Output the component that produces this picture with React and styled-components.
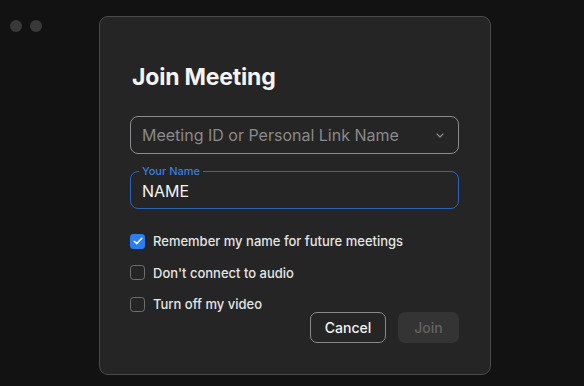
import React from "react";
import styled, { createGlobalStyle } from "styled-components";

const Global = createGlobalStyle`
  html, body {
    margin: 0;
    background: #121212;
  }
  body {
    font-family: Inter, "Noto Sans", "Liberation Sans", sans-serif;
    -webkit-font-smoothing: antialiased;
  }
`;

const Window = styled.div`
  display: flex;
  align-items: flex-start;
  width: 584px;
  height: 386px;
  padding-top: 16px;
  box-sizing: border-box;
  background: #121212;
  overflow: hidden;
`;

const Lights = styled.div`
  flex: none;
  display: flex;
  gap: 8px;
  width: 99px;
  padding: 4px 0 0 10px;
  box-sizing: border-box;
`;

const Light = styled.span`
  width: 12px;
  height: 12px;
  border-radius: 50%;
  background: #393939;
`;

const Dialog = styled.div`
  flex: none;
  width: 392px;
  height: 359px;
  box-sizing: border-box;
  background: #252525;
  border: 1px solid #4a4a4a;
  border-radius: 9px;
  padding: 45px 31px 0 30px;
  display: flex;
  flex-direction: column;
`;

const Title = styled.h1`
  margin: 0 0 0 2px;
  font-size: 23px;
  font-weight: 700;
  color: #f4f4f4;
  line-height: 30px;
  letter-spacing: -0.2px;
`;

const Select = styled.div`
  margin-top: 24px;
  height: 38px;
  box-sizing: border-box;
  border: 1.5px solid #8c8c8c;
  border-radius: 8px;
  display: flex;
  align-items: center;
  justify-content: space-between;
  padding: 0 14px 0 11px;
  color: #8a8a8a;
  font-size: 16px;
`;

const NameField = styled.fieldset`
  margin: 12px 0 0;
  height: 43px;
  box-sizing: border-box;
  border: 1.5px solid #2d63bd;
  border-radius: 8px;
  padding: 0 11px;
  display: flex;
  align-items: center;
`;

const Legend = styled.legend`
  font-size: 11px;
  line-height: 11px;
  font-weight: 500;
  color: #3a7ee0;
  padding: 0 3px;
  margin-left: -3px;
`;

const NameValue = styled.span`
  color: #f2f2f2;
  font-size: 16px;
  margin-top: 4px;
`;

const Options = styled.div`
  margin-top: 24px;
  display: flex;
  flex-direction: column;
  gap: 15.5px;
`;

const Option = styled.label`
  display: flex;
  align-items: center;
  gap: 8px;
  font-size: 13px;
  font-weight: 500;
  color: #e4e4e4;
  height: 16px;
`;

const Box = styled.span`
  width: 15px;
  height: 15px;
  box-sizing: border-box;
  border-radius: 3.5px;
  display: flex;
  align-items: center;
  justify-content: center;
  background: ${(p) => (p.checked ? "#2a7ef1" : "transparent")};
  border: ${(p) => (p.checked ? "none" : "1.5px solid #6f6f6f")};
`;

const Actions = styled.div`
  display: flex;
  justify-content: flex-end;
  gap: 12px;
  margin-top: 0;
`;

const Button = styled.button`
  height: 31px;
  box-sizing: border-box;
  border-radius: 7px;
  font-family: inherit;
  font-size: 14px;
  font-weight: 500;
  padding: 0;
  width: ${(p) => (p.primary ? "61px" : "76px")};
  background: ${(p) => (p.primary ? "#343434" : "transparent")};
  color: ${(p) => (p.primary ? "#626262" : "#f2f2f2")};
  border: ${(p) => (p.primary ? "none" : "1px solid #8a8a8a")};
`;

function Check() {
  return (
    <svg width="10" height="8" viewBox="0 0 10 8" fill="none">
      <path d="M1.2 4.2 L3.8 6.6 L8.8 1.2" stroke="#fff" strokeWidth="1.5" strokeLinecap="round" strokeLinejoin="round" />
    </svg>
  );
}

function Chevron() {
  return (
    <svg width="8" height="5" viewBox="0 0 8 5" fill="none">
      <path d="M1 1 L4 4 L7 1" stroke="#8a8a8a" strokeWidth="1.2" strokeLinecap="round" strokeLinejoin="round" />
    </svg>
  );
}

const options = [
  { label: "Remember my name for future meetings", checked: true },
  { label: "Don't connect to audio", checked: false },
  { label: "Turn off my video", checked: false },
];

export default function App() {
  return (
    <>
      <Global />
      <Window>
        <Lights>
          <Light />
          <Light />
        </Lights>
        <Dialog>
          <Title>Join Meeting</Title>
          <Select>
            <span>Meeting ID or Personal Link Name</span>
            <Chevron />
          </Select>
          <NameField>
            <Legend>Your Name</Legend>
            <NameValue>NAME</NameValue>
          </NameField>
          <Options>
            {options.map((o) => (
              <Option key={o.label}>
                <Box checked={o.checked}>{o.checked && <Check />}</Box>
                {o.label}
              </Option>
            ))}
          </Options>
          <Actions>
            <Button>Cancel</Button>
            <Button primary>Join</Button>
          </Actions>
        </Dialog>
      </Window>
    </>
  );
}
